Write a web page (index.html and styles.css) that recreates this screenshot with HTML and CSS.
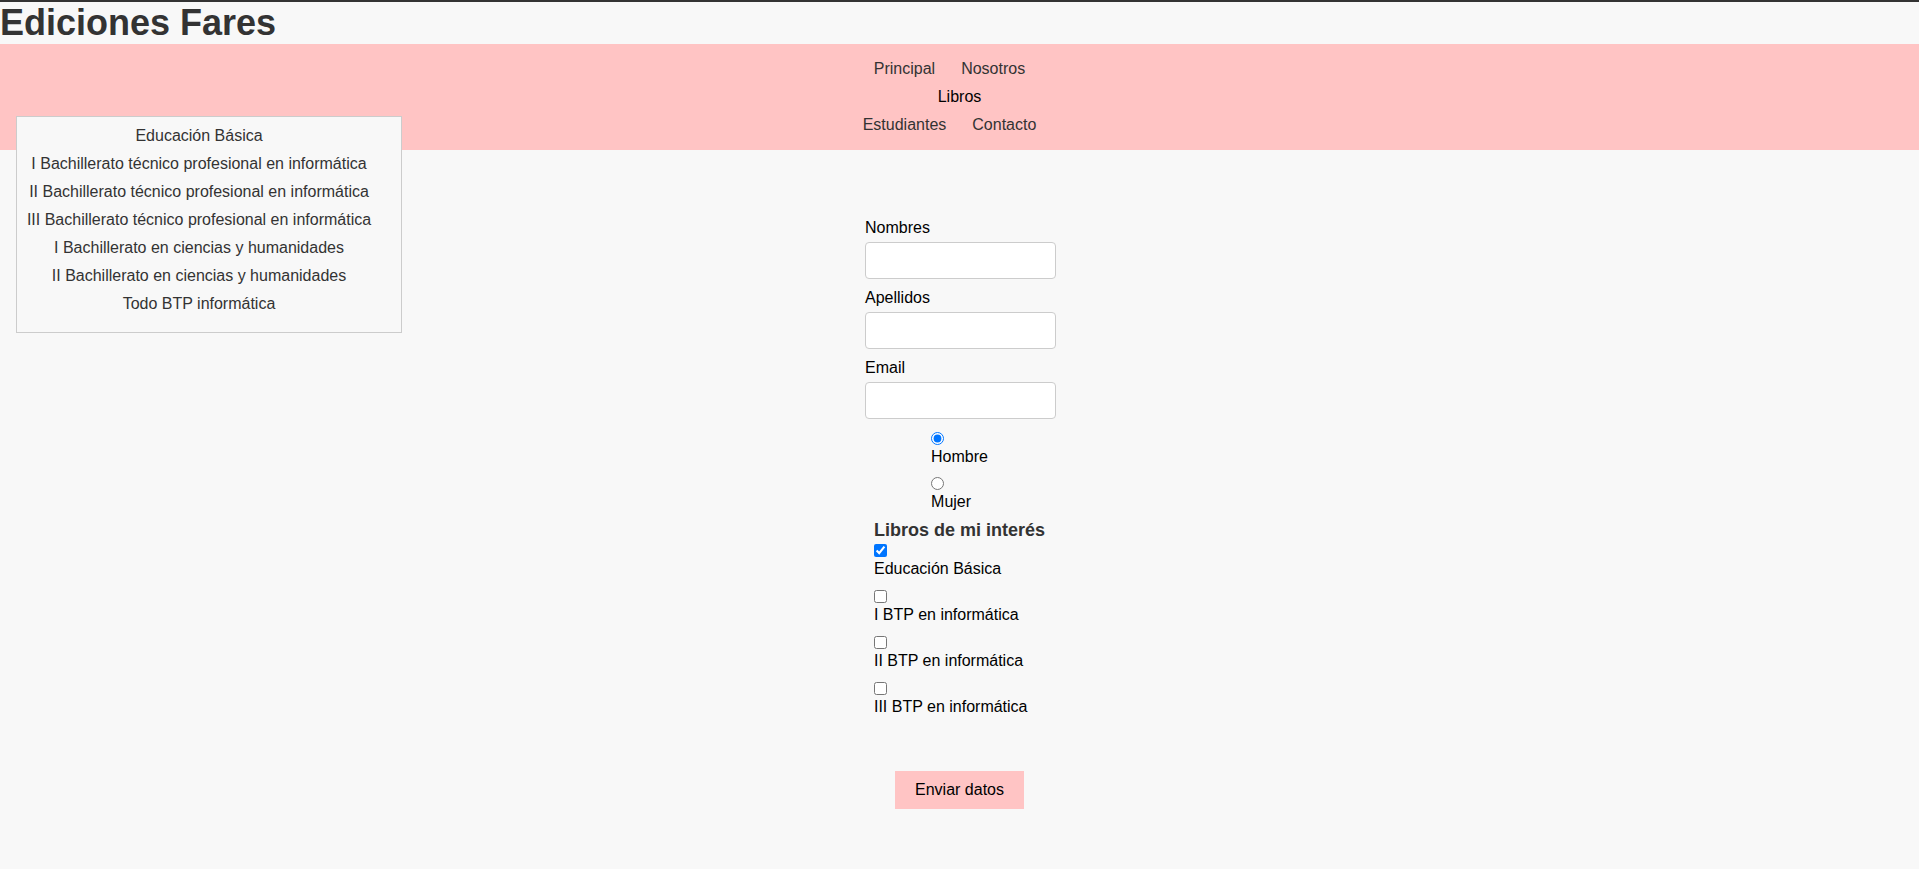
FILE: index.html
```html
<!DOCTYPE html>
<html lang="es">
<head>
<meta charset="utf-8">
<title>Ediciones Fares</title>
<link rel="stylesheet" href="styles.css">
</head>
<body>
<header class="site-header">
  <h1 class="site-title">Ediciones Fares</h1>
</header>
<nav class="main-nav">
  <ul class="nav-list">
    <li class="nav-item"><a class="nav-link" href="#">Principal</a></li>
    <li class="nav-item"><a class="nav-link" href="#">Nosotros</a></li>
    <li class="nav-item nav-item-active"><a class="nav-link nav-link-active" href="#">Libros</a></li>
    <li class="nav-item"><a class="nav-link" href="#">Estudiantes</a></li>
    <li class="nav-item"><a class="nav-link" href="#">Contacto</a></li>
  </ul>
</nav>
<ul class="submenu">
  <li class="submenu-item"><a class="submenu-link" href="#">Educación Básica</a></li>
  <li class="submenu-item"><a class="submenu-link" href="#">I Bachillerato técnico profesional en informática</a></li>
  <li class="submenu-item"><a class="submenu-link" href="#">II Bachillerato técnico profesional en informática</a></li>
  <li class="submenu-item"><a class="submenu-link" href="#">III Bachillerato técnico profesional en informática</a></li>
  <li class="submenu-item"><a class="submenu-link" href="#">I Bachillerato en ciencias y humanidades</a></li>
  <li class="submenu-item"><a class="submenu-link" href="#">II Bachillerato en ciencias y humanidades</a></li>
  <li class="submenu-item"><a class="submenu-link" href="#">Todo BTP informática</a></li>
</ul>
<main class="content">
  <form class="contact-form">
    <div class="fields">
      <label class="field-label" for="nombres">Nombres</label>
      <input class="field-input" type="text" id="nombres">
      <label class="field-label" for="apellidos">Apellidos</label>
      <input class="field-input" type="text" id="apellidos">
      <label class="field-label" for="email">Email</label>
      <input class="field-input" type="email" id="email">
    </div>
    <div class="choice-group radio-group">
      <input class="choice-input" type="radio" name="sexo" id="hombre" checked>
      <label class="choice-label" for="hombre">Hombre</label>
      <input class="choice-input" type="radio" name="sexo" id="mujer">
      <label class="choice-label" for="mujer">Mujer</label>
    </div>
    <div class="choice-group check-group">
      <h3 class="group-title">Libros de mi interés</h3>
      <input class="choice-input" type="checkbox" id="c1" checked>
      <label class="choice-label" for="c1">Educación Básica</label>
      <input class="choice-input" type="checkbox" id="c2">
      <label class="choice-label" for="c2">I BTP en informática</label>
      <input class="choice-input" type="checkbox" id="c3">
      <label class="choice-label" for="c3">II BTP en informática</label>
      <input class="choice-input" type="checkbox" id="c4">
      <label class="choice-label" for="c4">III BTP en informática</label>
    </div>
    <button class="submit-btn" type="button">Enviar datos</button>
  </form>
</main>
</body>
</html>
```

FILE: styles.css
```css
* {
  box-sizing: border-box;
}

html {
  background: #f8f8f8;
}

body {
  margin: 0;
  border-top: 2px solid #333;
  background: #f8f8f8;
  font-family: "Liberation Sans", Arial, sans-serif;
  font-size: 16px;
  color: #000;
}

.site-title {
  margin: 0;
  font-size: 36px;
  line-height: 42px;
  font-weight: bold;
  color: #333;
}

.main-nav {
  background: #ffc4c4;
  padding: 11px 0 11px;
}

.nav-list {
  list-style: none;
  margin: 0 auto;
  padding: 0;
  width: 220px;
  display: flex;
  flex-wrap: wrap;
  justify-content: center;
}

.nav-item-active {
  flex-basis: 100%;
  text-align: center;
}

.nav-link {
  display: block;
  padding: 5px 23px 5px 3px;
  line-height: 18px;
  color: #333;
  text-decoration: none;
}

.nav-link-active {
  padding: 5px 0;
  color: #000;
}

.submenu {
  position: absolute;
  top: 116px;
  left: 16px;
  width: 386px;
  margin: 0;
  padding: 5px 20px 14px 0;
  list-style: none;
  background: #f8f8f8;
  border: 1px solid #cccccc;
  text-align: center;
}

.submenu-link {
  display: block;
  padding: 5px 0;
  line-height: 18px;
  color: #333;
  text-decoration: none;
}

.content {
  padding: 69px 0 40px;
}

.contact-form {
  display: flex;
  flex-direction: column;
  align-items: center;
}

.fields {
  width: 191px;
  margin-left: 2px;
  display: flex;
  flex-direction: column;
}

.field-label {
  line-height: 18px;
  margin-bottom: 5px;
}

.field-input {
  height: 37px;
  width: 191px;
  margin: 0 0 10px;
  border: 1px solid #cccccc;
  border-radius: 4px;
  background: #fff;
  font-size: 16px;
  padding: 4px 8px;
}

.choice-group {
  display: flex;
  flex-direction: column;
  align-items: flex-start;
}

.radio-group {
  margin-top: 3px;
}

.check-group {
  margin-top: -2px;
}

.choice-input {
  margin: 0 0 3px;
  width: 13px;
  height: 13px;
}

.choice-label {
  line-height: 18px;
  margin-bottom: 11px;
}

.check-group .choice-label {
  margin-bottom: 12px;
}

.group-title {
  margin: 0 0 3px;
  font-size: 18px;
  line-height: 21px;
  font-weight: bold;
  color: #333;
}

.submit-btn {
  margin-top: 43px;
  padding: 10px 20px;
  border: none;
  background: #ffc4c4;
  font-family: "Liberation Sans", Arial, sans-serif;
  font-size: 16px;
  line-height: 18px;
  color: #000;
}
```
